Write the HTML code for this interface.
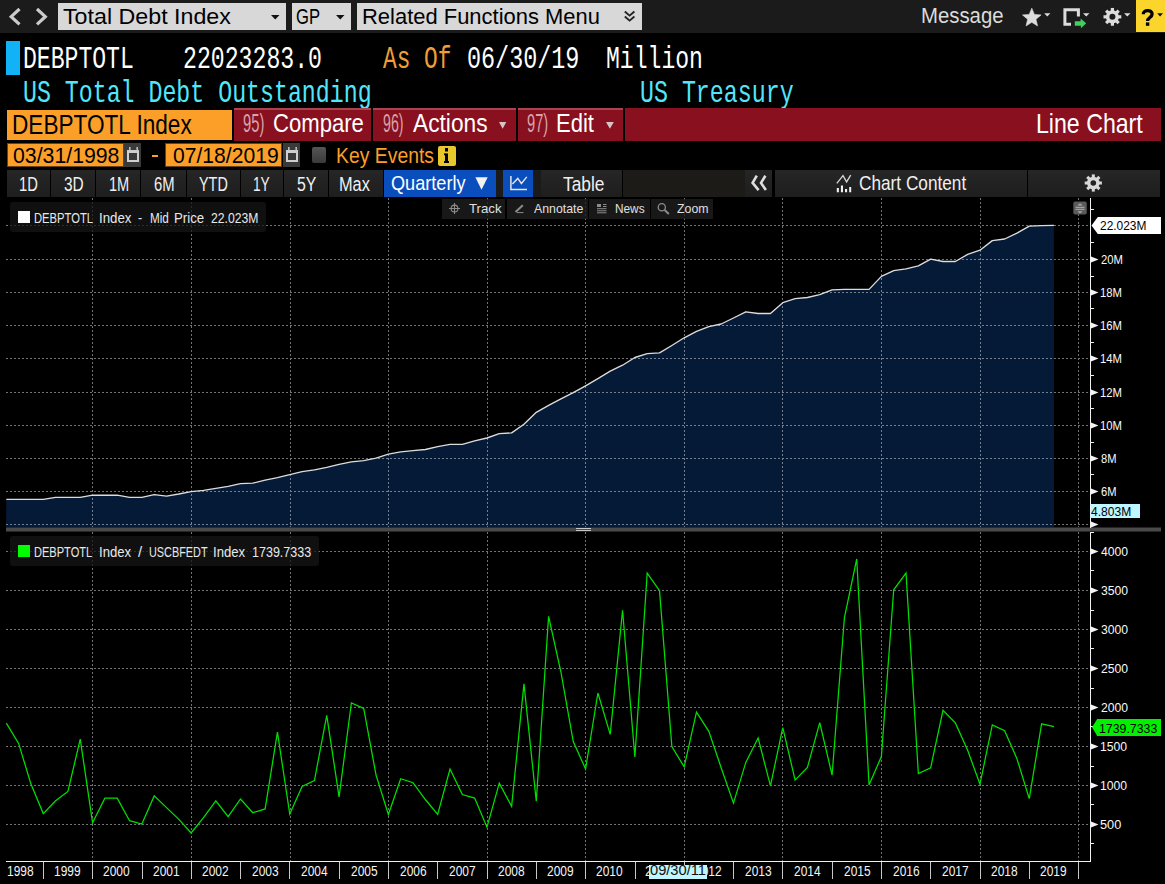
<!DOCTYPE html>
<html><head><meta charset="utf-8"><style>
html,body{margin:0;padding:0;background:#000;width:1165px;height:884px;overflow:hidden}
.r{position:absolute}
.t{position:absolute;line-height:0;white-space:pre;transform-origin:0 0}
.ov{position:absolute;left:0;top:0}
</style></head><body>
<div class="r" style="left:0px;top:0px;width:1165px;height:33px;background:#1b1b1b;"></div>
<div class="r" style="left:58px;top:3px;width:228px;height:27px;background:#d8d8d8;"></div>
<div class="r" style="left:292px;top:3px;width:59px;height:27px;background:#d8d8d8;"></div>
<div class="r" style="left:357px;top:3px;width:285px;height:27px;background:#d8d8d8;"></div>
<div class="r" style="left:1136px;top:0px;width:29px;height:32px;background:#fbd52b;"></div>
<span class="t" style="left:62.57px;top:16.69px;font-size:22.38px;font-family:'Liberation Sans', sans-serif;font-weight:normal;color:#000;transform:scaleX(1.0382);">Total Debt Index</span>
<span class="t" style="left:296.26px;top:16.69px;font-size:22.38px;font-family:'Liberation Sans', sans-serif;font-weight:normal;color:#000;transform:scaleX(0.7420);">GP</span>
<span class="t" style="left:361.97px;top:16.69px;font-size:22.38px;font-family:'Liberation Sans', sans-serif;font-weight:normal;color:#000;transform:scaleX(0.9809);">Related Functions Menu</span>
<span class="t" style="left:921.04px;top:15.14px;font-size:22.67px;font-family:'Liberation Sans', sans-serif;font-weight:normal;color:#dcdcdc;transform:scaleX(0.8983);">Message</span>
<div class="r" style="left:6px;top:41px;width:14px;height:34px;background:#12b2f6;"></div>
<span class="t" style="left:23.37px;top:60.07px;font-size:30.52px;font-family:'Liberation Mono', monospace;font-weight:normal;color:#fff;transform:scaleX(0.7565);">DEBPTOTL</span>
<span class="t" style="left:182.98px;top:60.07px;font-size:30.52px;font-family:'Liberation Mono', monospace;font-weight:normal;color:#fff;transform:scaleX(0.7592);">22023283.0</span>
<span class="t" style="left:383.40px;top:60.07px;font-size:30.52px;font-family:'Liberation Mono', monospace;font-weight:normal;color:#f29d38;transform:scaleX(0.7472);">As Of</span>
<span class="t" style="left:466.77px;top:60.07px;font-size:30.52px;font-family:'Liberation Mono', monospace;font-weight:normal;color:#fff;transform:scaleX(0.7674);">06/30/19</span>
<span class="t" style="left:606.06px;top:60.07px;font-size:30.52px;font-family:'Liberation Mono', monospace;font-weight:normal;color:#fff;transform:scaleX(0.7561);">Million</span>
<span class="t" style="left:23.37px;top:94.09px;font-size:30.52px;font-family:'Liberation Mono', monospace;font-weight:normal;color:#52e6fb;transform:scaleX(0.7614);">US Total Debt Outstanding</span>
<span class="t" style="left:640.25px;top:94.09px;font-size:30.52px;font-family:'Liberation Mono', monospace;font-weight:normal;color:#52e6fb;transform:scaleX(0.7627);">US Treasury</span>
<div class="r" style="left:7px;top:110px;width:225px;height:30px;background:#fb9f28;"></div>
<span class="t" style="left:11.61px;top:123.71px;font-size:28.20px;font-family:'Liberation Sans', sans-serif;font-weight:normal;color:#000;transform:scaleX(0.8021);">DEBPTOTL Index</span>
<div class="r" style="left:234px;top:108px;width:137px;height:33px;background:#88101f;border-top:2px solid #a9434d;box-sizing:border-box;"></div>
<div class="r" style="left:373px;top:108px;width:143px;height:33px;background:#88101f;border-top:2px solid #a9434d;box-sizing:border-box;"></div>
<div class="r" style="left:518px;top:108px;width:105px;height:33px;background:#88101f;border-top:2px solid #a9434d;box-sizing:border-box;"></div>
<div class="r" style="left:625px;top:108px;width:536px;height:33px;background:#88101f;"></div>
<span class="t" style="left:242.85px;top:123.38px;font-size:26.31px;font-family:'Liberation Sans', sans-serif;font-weight:normal;color:#d9a3aa;transform:scaleX(0.5603);">95)</span>
<span class="t" style="left:273.03px;top:123.38px;font-size:26.31px;font-family:'Liberation Sans', sans-serif;font-weight:normal;color:#fff;transform:scaleX(0.8406);">Compare</span>
<span class="t" style="left:382.92px;top:123.38px;font-size:26.31px;font-family:'Liberation Sans', sans-serif;font-weight:normal;color:#d9a3aa;transform:scaleX(0.5392);">96)</span>
<span class="t" style="left:412.50px;top:123.38px;font-size:26.31px;font-family:'Liberation Sans', sans-serif;font-weight:normal;color:#fff;transform:scaleX(0.8645);">Actions</span>
<span class="t" style="left:526.68px;top:123.38px;font-size:26.31px;font-family:'Liberation Sans', sans-serif;font-weight:normal;color:#d9a3aa;transform:scaleX(0.5577);">97)</span>
<span class="t" style="left:555.88px;top:123.38px;font-size:26.31px;font-family:'Liberation Sans', sans-serif;font-weight:normal;color:#fff;transform:scaleX(0.8373);">Edit</span>
<span class="t" style="left:1036.25px;top:123.57px;font-size:28.05px;font-family:'Liberation Sans', sans-serif;font-weight:normal;color:#fff;transform:scaleX(0.8249);">Line Chart</span>
<div class="r" style="left:7px;top:143px;width:117px;height:24px;background:#fb9f28;box-shadow:inset 0 0 0 1px #6b4210;"></div>
<div class="r" style="left:124px;top:143px;width:17px;height:24px;background:#3a3a3a;"></div>
<div class="r" style="left:165px;top:143px;width:117px;height:24px;background:#fb9f28;box-shadow:inset 0 0 0 1px #6b4210;"></div>
<div class="r" style="left:283px;top:143px;width:17px;height:24px;background:#3a3a3a;"></div>
<span class="t" style="left:12.99px;top:155.50px;font-size:21.95px;font-family:'Liberation Sans', sans-serif;font-weight:normal;color:#000;transform:scaleX(0.9695);">03/31/1998</span>
<span class="t" style="left:172.97px;top:155.50px;font-size:21.95px;font-family:'Liberation Sans', sans-serif;font-weight:normal;color:#000;transform:scaleX(0.9622);">07/18/2019</span>
<div class="r" style="left:152px;top:155px;width:6px;height:2px;background:#fb9f28;"></div>
<div class="r" style="left:312px;top:147px;width:14px;height:16px;background:linear-gradient(#555,#3a3a3a);border-radius:2px;"></div>
<span class="t" style="left:335.53px;top:155.50px;font-size:21.95px;font-family:'Liberation Sans', sans-serif;font-weight:normal;color:#fb9f28;transform:scaleX(0.8833);">Key Events</span>
<div class="r" style="left:438px;top:146px;width:18px;height:20px;background:#e8c82c;border-radius:2px;"></div>
<div class="r" style="left:7px;top:170px;width:43px;height:27px;background:linear-gradient(#262626,#1e1e1e);"></div>
<div class="r" style="left:51px;top:170px;width:44px;height:27px;background:linear-gradient(#262626,#1e1e1e);"></div>
<div class="r" style="left:96px;top:170px;width:44px;height:27px;background:linear-gradient(#262626,#1e1e1e);"></div>
<div class="r" style="left:141px;top:170px;width:45px;height:27px;background:linear-gradient(#262626,#1e1e1e);"></div>
<div class="r" style="left:187px;top:170px;width:53px;height:27px;background:linear-gradient(#262626,#1e1e1e);"></div>
<div class="r" style="left:241px;top:170px;width:42px;height:27px;background:linear-gradient(#262626,#1e1e1e);"></div>
<div class="r" style="left:284px;top:170px;width:44px;height:27px;background:linear-gradient(#262626,#1e1e1e);"></div>
<div class="r" style="left:329px;top:170px;width:54px;height:27px;background:linear-gradient(#262626,#1e1e1e);"></div>
<span class="t" style="left:18.96px;top:183.53px;font-size:19.91px;font-family:'Liberation Sans', sans-serif;font-weight:normal;color:#f0f0f0;transform:scaleX(0.7415);">1D</span>
<span class="t" style="left:63.86px;top:183.53px;font-size:19.91px;font-family:'Liberation Sans', sans-serif;font-weight:normal;color:#f0f0f0;transform:scaleX(0.7768);">3D</span>
<span class="t" style="left:108.96px;top:183.53px;font-size:19.91px;font-family:'Liberation Sans', sans-serif;font-weight:normal;color:#f0f0f0;transform:scaleX(0.7334);">1M</span>
<span class="t" style="left:154.21px;top:183.53px;font-size:19.91px;font-family:'Liberation Sans', sans-serif;font-weight:normal;color:#f0f0f0;transform:scaleX(0.7442);">6M</span>
<span class="t" style="left:198.92px;top:183.53px;font-size:19.91px;font-family:'Liberation Sans', sans-serif;font-weight:normal;color:#f0f0f0;transform:scaleX(0.7231);">YTD</span>
<span class="t" style="left:253.07px;top:183.53px;font-size:19.91px;font-family:'Liberation Sans', sans-serif;font-weight:normal;color:#f0f0f0;transform:scaleX(0.6887);">1Y</span>
<span class="t" style="left:296.66px;top:183.53px;font-size:19.91px;font-family:'Liberation Sans', sans-serif;font-weight:normal;color:#f0f0f0;transform:scaleX(0.7953);">5Y</span>
<span class="t" style="left:339.33px;top:183.53px;font-size:19.91px;font-family:'Liberation Sans', sans-serif;font-weight:normal;color:#f0f0f0;transform:scaleX(0.8210);">Max</span>
<div class="r" style="left:384px;top:170px;width:112px;height:27px;background:#0a4ebd;"></div>
<span class="t" style="left:390.91px;top:182.56px;font-size:20.06px;font-family:'Liberation Sans', sans-serif;font-weight:normal;color:#fff;transform:scaleX(0.9037);">Quarterly</span>
<div class="r" style="left:496px;top:170px;width:7px;height:27px;background:#1a1a1a;"></div>
<div class="r" style="left:503px;top:170px;width:30px;height:27px;background:#0a4ebd;"></div>
<div class="r" style="left:533px;top:170px;width:8px;height:27px;background:#1a1a1a;"></div>
<div class="r" style="left:541px;top:170px;width:81px;height:27px;background:linear-gradient(#262626,#1e1e1e);"></div>
<span class="t" style="left:562.72px;top:183.53px;font-size:19.91px;font-family:'Liberation Sans', sans-serif;font-weight:normal;color:#f0f0f0;transform:scaleX(0.8699);">Table</span>
<div class="r" style="left:623px;top:170px;width:122px;height:27px;background:#1c1b18;"></div>
<div class="r" style="left:745px;top:170px;width:27px;height:27px;background:linear-gradient(#262626,#1e1e1e);"></div>
<div class="r" style="left:775px;top:170px;width:252px;height:27px;background:linear-gradient(#262626,#1e1e1e);"></div>
<span class="t" style="left:859.45px;top:182.71px;font-size:19.62px;font-family:'Liberation Sans', sans-serif;font-weight:normal;color:#f0f0f0;transform:scaleX(0.8784);">Chart Content</span>
<div class="r" style="left:1028px;top:170px;width:132px;height:27px;background:linear-gradient(#262626,#1e1e1e);"></div>

<svg class="ov" width="1165" height="884" viewBox="0 0 1165 884">
<polygon points="6,527.5 6.30,499.40 18.62,499.40 30.95,499.40 43.27,499.40 55.60,497.30 67.92,497.30 80.25,497.30 92.57,495.20 104.90,495.20 117.22,495.20 129.55,497.30 141.88,497.30 154.20,494.70 166.53,496.10 178.85,494.00 191.18,491.60 203.50,490.40 215.82,488.40 228.15,486.30 240.47,483.70 252.80,483.20 265.12,480.10 277.45,477.60 289.77,474.60 302.10,471.70 314.43,469.80 326.75,467.40 339.07,464.30 351.40,461.80 363.72,460.60 376.05,458.20 388.38,454.20 400.70,451.80 413.02,450.70 425.35,449.50 437.68,446.60 450.00,444.40 462.32,444.40 474.65,440.90 486.97,438.00 499.30,433.70 511.62,432.90 523.95,424.30 536.27,412.30 548.60,405.40 560.92,398.80 573.25,392.70 585.57,385.80 597.90,378.60 610.22,371.20 622.55,365.20 634.87,357.50 647.20,353.70 659.52,352.90 671.85,345.50 684.17,337.80 696.50,331.40 708.82,326.60 721.15,324.00 733.47,318.00 745.80,311.80 758.12,313.50 770.45,313.50 782.77,302.70 795.10,298.70 807.42,297.50 819.75,294.60 832.07,289.80 844.40,289.40 856.72,289.40 869.05,289.40 881.37,276.40 893.70,270.60 906.02,268.80 918.35,265.80 930.67,259.10 943.00,261.50 955.32,261.50 967.65,254.40 979.97,250.20 992.30,240.60 1004.62,239.00 1016.95,233.20 1029.27,226.10 1041.60,225.70 1053.92,225.40 1054,527.5" fill="#041a37"/>
<path d="M6 225.5H1090M6 259.5H1090M6 292.5H1090M6 325.5H1090M6 358.5H1090M6 392.5H1090M6 425.5H1090M6 458.5H1090M6 491.5H1090M6 524.5H1090M6 551.5H1090M6 590.5H1090M6 629.5H1090M6 668.5H1090M6 707.5H1090M6 746.5H1090M6 785.5H1090M6 824.5H1090M92.5 198V527M92.5 532V861M191.5 198V527M191.5 532V861M290.5 198V527M290.5 532V861M388.5 198V527M388.5 532V861M487.5 198V527M487.5 532V861M585.5 198V527M585.5 532V861M684.5 198V527M684.5 532V861M782.5 198V527M782.5 532V861M881.5 198V527M881.5 532V861M980.5 198V527M980.5 532V861M1078.5 198V527M1078.5 532V861" stroke="rgba(255,255,255,0.45)" stroke-width="1" stroke-dasharray="2 2" fill="none" shape-rendering="crispEdges"/>
<polyline points="6.30,499.40 18.62,499.40 30.95,499.40 43.27,499.40 55.60,497.30 67.92,497.30 80.25,497.30 92.57,495.20 104.90,495.20 117.22,495.20 129.55,497.30 141.88,497.30 154.20,494.70 166.53,496.10 178.85,494.00 191.18,491.60 203.50,490.40 215.82,488.40 228.15,486.30 240.47,483.70 252.80,483.20 265.12,480.10 277.45,477.60 289.77,474.60 302.10,471.70 314.43,469.80 326.75,467.40 339.07,464.30 351.40,461.80 363.72,460.60 376.05,458.20 388.38,454.20 400.70,451.80 413.02,450.70 425.35,449.50 437.68,446.60 450.00,444.40 462.32,444.40 474.65,440.90 486.97,438.00 499.30,433.70 511.62,432.90 523.95,424.30 536.27,412.30 548.60,405.40 560.92,398.80 573.25,392.70 585.57,385.80 597.90,378.60 610.22,371.20 622.55,365.20 634.87,357.50 647.20,353.70 659.52,352.90 671.85,345.50 684.17,337.80 696.50,331.40 708.82,326.60 721.15,324.00 733.47,318.00 745.80,311.80 758.12,313.50 770.45,313.50 782.77,302.70 795.10,298.70 807.42,297.50 819.75,294.60 832.07,289.80 844.40,289.40 856.72,289.40 869.05,289.40 881.37,276.40 893.70,270.60 906.02,268.80 918.35,265.80 930.67,259.10 943.00,261.50 955.32,261.50 967.65,254.40 979.97,250.20 992.30,240.60 1004.62,239.00 1016.95,233.20 1029.27,226.10 1041.60,225.70 1053.92,225.40" fill="none" stroke="#dcdcdc" stroke-width="1.35" stroke-linejoin="round"/>
<polyline points="6.30,723.10 18.62,743.40 30.95,784.10 43.27,813.60 55.60,800.80 67.92,791.40 80.25,739.20 92.57,822.70 104.90,798.20 117.22,798.20 129.55,820.70 141.88,824.00 154.20,795.90 166.53,807.60 178.85,819.40 191.18,833.00 203.50,817.60 215.82,800.80 228.15,816.70 240.47,799.00 252.80,812.70 265.12,808.90 277.45,732.20 289.77,814.00 302.10,786.50 314.43,780.50 326.75,715.30 339.07,796.80 351.40,703.00 363.72,708.50 376.05,775.10 388.38,814.50 400.70,778.70 413.02,782.70 425.35,799.50 437.68,814.50 450.00,769.10 462.32,794.60 474.65,798.10 486.97,827.20 499.30,783.20 511.62,806.40 523.95,683.90 536.27,801.30 548.60,616.30 560.92,672.00 573.25,741.50 585.57,769.00 597.90,693.00 610.22,734.40 622.55,610.20 634.87,757.00 647.20,573.10 659.52,590.70 671.85,746.50 684.17,766.90 696.50,712.10 708.82,731.30 721.15,767.70 733.47,803.10 745.80,762.40 758.12,738.00 770.45,785.90 782.77,727.60 795.10,780.10 807.42,767.50 819.75,722.60 832.07,775.10 844.40,617.80 856.72,559.00 869.05,785.00 881.37,756.60 893.70,589.80 906.02,573.10 918.35,773.60 930.67,767.80 943.00,710.30 955.32,722.90 967.65,750.30 979.97,784.10 992.30,724.90 1004.62,730.70 1016.95,758.80 1029.27,798.60 1041.60,723.80 1053.92,726.70" fill="none" stroke="#00e000" stroke-width="1.25" stroke-linejoin="miter"/>
<rect x="6" y="527.5" width="1155" height="4" fill="#4a4a4a"/>
<path d="M576 528.5H591M576 530.5H591" stroke="#c8c8c8" stroke-width="1" shape-rendering="crispEdges"/>
<path d="M1090.5 198V527.5M1090.5 532V862M6 861.5H1091" stroke="#f0f0f0" stroke-width="1" fill="none" shape-rendering="crispEdges"/>
<path d="M43.5 862V879M92.5 862V879M142.5 862V879M191.5 862V879M240.5 862V879M289.5 862V879M339.5 862V879M388.5 862V879M437.5 862V879M487.5 862V879M536.5 862V879M585.5 862V879M635.5 862V879M684.5 862V879M733.5 862V879M782.5 862V879M832.5 862V879M881.5 862V879M930.5 862V879M980.5 862V879M1029.5 862V879M1078.5 862V879" stroke="#c8c8c8" stroke-width="1" fill="none" shape-rendering="crispEdges"/>
<path d="M1091 242.5H1094M1091 276.5H1094M1091 308.5H1094M1091 342.5H1094M1091 375.5H1094M1091 408.5H1094M1091 442.5H1094M1091 474.5H1094M1091 508.5H1094M1091 209.5H1094M1091 570.5H1094M1091 610.5H1094M1091 648.5H1094M1091 688.5H1094M1091 726.5H1094M1091 766.5H1094M1091 804.5H1094M1091 532.5H1094M1091 843.5H1094" stroke="#f0f0f0" stroke-width="1" fill="none" shape-rendering="crispEdges"/>
<path d="M1091 256.5L1098.5 259.5L1091 262.5ZM1091 289.5L1098.5 292.5L1091 295.5ZM1091 322.5L1098.5 325.5L1091 328.5ZM1091 355.5L1098.5 358.5L1091 361.5ZM1091 389.5L1098.5 392.5L1091 395.5ZM1091 422.5L1098.5 425.5L1091 428.5ZM1091 455.5L1098.5 458.5L1091 461.5ZM1091 488.5L1098.5 491.5L1091 494.5ZM1091 521.5L1098.5 524.5L1091 527.5ZM1091 548.5L1098.5 551.5L1091 554.5ZM1091 587.5L1098.5 590.5L1091 593.5ZM1091 626.5L1098.5 629.5L1091 632.5ZM1091 665.5L1098.5 668.5L1091 671.5ZM1091 704.5L1098.5 707.5L1091 710.5ZM1091 743.5L1098.5 746.5L1091 749.5ZM1091 782.5L1098.5 785.5L1091 788.5ZM1091 821.5L1098.5 824.5L1091 827.5Z" fill="#f4f4f4"/>
<path d="M1091.5 225.5L1097.8 217H1161V234H1097.8Z" fill="#fff"/>
<rect x="1090.5" y="504" width="49.5" height="14" fill="#bff6ff"/>
<path d="M1092 727.3L1097.2 719H1161V736H1097.2Z" fill="#00f000"/>
</svg>

<div class="r" style="left:10px;top:202px;width:256px;height:30px;background:rgba(22,22,22,0.75);border-radius:3px;"></div>
<div class="r" style="left:18px;top:211px;width:12px;height:12px;background:#fff;"></div>
<span class="t" style="left:34.22px;top:218.00px;font-size:13.81px;font-family:'Liberation Sans', sans-serif;font-weight:normal;color:#e8e8e8;transform:scaleX(0.8123);">DEBPTOTL</span>
<span class="t" style="left:99.27px;top:218.00px;font-size:13.81px;font-family:'Liberation Sans', sans-serif;font-weight:normal;color:#e8e8e8;transform:scaleX(0.9626);">Index</span>
<span class="t" style="left:137.86px;top:218.00px;font-size:13.81px;font-family:'Liberation Sans', sans-serif;font-weight:normal;color:#e8e8e8;transform:scaleX(0.9079);">-</span>
<span class="t" style="left:149.54px;top:218.00px;font-size:13.81px;font-family:'Liberation Sans', sans-serif;font-weight:normal;color:#e8e8e8;transform:scaleX(0.8456);">Mid</span>
<span class="t" style="left:173.76px;top:218.00px;font-size:13.81px;font-family:'Liberation Sans', sans-serif;font-weight:normal;color:#e8e8e8;transform:scaleX(0.9592);">Price</span>
<span class="t" style="left:211.29px;top:218.00px;font-size:13.81px;font-family:'Liberation Sans', sans-serif;font-weight:normal;color:#e8e8e8;transform:scaleX(0.8824);">22.023M</span>
<div class="r" style="left:10px;top:536px;width:309px;height:30px;background:rgba(22,22,22,0.75);border-radius:3px;"></div>
<div class="r" style="left:18px;top:545px;width:12px;height:12px;background:#00ff00;"></div>
<span class="t" style="left:34.37px;top:552.22px;font-size:13.95px;font-family:'Liberation Sans', sans-serif;font-weight:normal;color:#e8e8e8;transform:scaleX(0.7930);">DEBPTOTL</span>
<span class="t" style="left:98.88px;top:552.22px;font-size:13.95px;font-family:'Liberation Sans', sans-serif;font-weight:normal;color:#e8e8e8;transform:scaleX(0.9438);">Index</span>
<span class="t" style="left:137.63px;top:552.22px;font-size:13.95px;font-family:'Liberation Sans', sans-serif;font-weight:normal;color:#e8e8e8;transform:scaleX(1.0750);">/</span>
<span class="t" style="left:148.73px;top:552.22px;font-size:13.95px;font-family:'Liberation Sans', sans-serif;font-weight:normal;color:#e8e8e8;transform:scaleX(0.7791);">USCBFEDT</span>
<span class="t" style="left:213.20px;top:552.22px;font-size:13.95px;font-family:'Liberation Sans', sans-serif;font-weight:normal;color:#e8e8e8;transform:scaleX(0.9409);">Index</span>
<span class="t" style="left:251.79px;top:552.22px;font-size:13.95px;font-family:'Liberation Sans', sans-serif;font-weight:normal;color:#e8e8e8;transform:scaleX(0.8979);">1739.7333</span>
<div class="r" style="left:442px;top:199px;width:63px;height:20px;background:rgba(30,30,30,0.8);"></div>
<div class="r" style="left:507px;top:199px;width:81px;height:20px;background:rgba(30,30,30,0.8);"></div>
<div class="r" style="left:589px;top:199px;width:61px;height:20px;background:rgba(30,30,30,0.8);"></div>
<div class="r" style="left:651px;top:199px;width:62px;height:20px;background:rgba(30,30,30,0.8);"></div>
<span class="t" style="left:468.69px;top:209.13px;font-size:12.79px;font-family:'Liberation Sans', sans-serif;font-weight:normal;color:#e0e0e0;transform:scaleX(1.0319);">Track</span>
<span class="t" style="left:533.96px;top:209.13px;font-size:12.79px;font-family:'Liberation Sans', sans-serif;font-weight:normal;color:#e0e0e0;transform:scaleX(0.9624);">Annotate</span>
<span class="t" style="left:614.52px;top:209.13px;font-size:12.79px;font-family:'Liberation Sans', sans-serif;font-weight:normal;color:#e0e0e0;transform:scaleX(0.9257);">News</span>
<span class="t" style="left:677.35px;top:209.13px;font-size:12.79px;font-family:'Liberation Sans', sans-serif;font-weight:normal;color:#e0e0e0;transform:scaleX(0.9639);">Zoom</span>
<span class="t" style="left:1100.78px;top:260.41px;font-size:13.37px;font-family:'Liberation Sans', sans-serif;font-weight:normal;color:#f8f8f8;transform:scaleX(0.8459);">20M</span>
<span class="t" style="left:1100.35px;top:293.41px;font-size:13.37px;font-family:'Liberation Sans', sans-serif;font-weight:normal;color:#f8f8f8;transform:scaleX(0.8459);">18M</span>
<span class="t" style="left:1100.35px;top:326.41px;font-size:13.37px;font-family:'Liberation Sans', sans-serif;font-weight:normal;color:#f8f8f8;transform:scaleX(0.8459);">16M</span>
<span class="t" style="left:1100.35px;top:359.41px;font-size:13.37px;font-family:'Liberation Sans', sans-serif;font-weight:normal;color:#f8f8f8;transform:scaleX(0.8459);">14M</span>
<span class="t" style="left:1100.35px;top:393.31px;font-size:13.37px;font-family:'Liberation Sans', sans-serif;font-weight:normal;color:#f8f8f8;transform:scaleX(0.8459);">12M</span>
<span class="t" style="left:1100.35px;top:426.41px;font-size:13.37px;font-family:'Liberation Sans', sans-serif;font-weight:normal;color:#f8f8f8;transform:scaleX(0.8459);">10M</span>
<span class="t" style="left:1100.69px;top:459.41px;font-size:13.37px;font-family:'Liberation Sans', sans-serif;font-weight:normal;color:#f8f8f8;transform:scaleX(0.8339);">8M</span>
<span class="t" style="left:1100.69px;top:492.41px;font-size:13.37px;font-family:'Liberation Sans', sans-serif;font-weight:normal;color:#f8f8f8;transform:scaleX(0.8339);">6M</span>
<span class="t" style="left:1100.52px;top:552.24px;font-size:13.37px;font-family:'Liberation Sans', sans-serif;font-weight:normal;color:#f8f8f8;transform:scaleX(0.9108);">4000</span>
<span class="t" style="left:1100.52px;top:591.41px;font-size:13.37px;font-family:'Liberation Sans', sans-serif;font-weight:normal;color:#f8f8f8;transform:scaleX(0.9108);">3500</span>
<span class="t" style="left:1100.52px;top:630.41px;font-size:13.37px;font-family:'Liberation Sans', sans-serif;font-weight:normal;color:#f8f8f8;transform:scaleX(0.9108);">3000</span>
<span class="t" style="left:1100.52px;top:669.41px;font-size:13.37px;font-family:'Liberation Sans', sans-serif;font-weight:normal;color:#f8f8f8;transform:scaleX(0.9108);">2500</span>
<span class="t" style="left:1100.52px;top:708.41px;font-size:13.37px;font-family:'Liberation Sans', sans-serif;font-weight:normal;color:#f8f8f8;transform:scaleX(0.9108);">2000</span>
<span class="t" style="left:1100.14px;top:747.41px;font-size:13.37px;font-family:'Liberation Sans', sans-serif;font-weight:normal;color:#f8f8f8;transform:scaleX(0.9108);">1500</span>
<span class="t" style="left:1100.14px;top:786.41px;font-size:13.37px;font-family:'Liberation Sans', sans-serif;font-weight:normal;color:#f8f8f8;transform:scaleX(0.9108);">1000</span>
<span class="t" style="left:1100.03px;top:825.41px;font-size:13.37px;font-family:'Liberation Sans', sans-serif;font-weight:normal;color:#f8f8f8;transform:scaleX(0.9538);">500</span>
<span class="t" style="left:1100.01px;top:226.31px;font-size:13.66px;font-family:'Liberation Sans', sans-serif;font-weight:normal;color:#000;transform:scaleX(0.8730);">22.023M</span>
<span class="t" style="left:1090.89px;top:511.85px;font-size:12.35px;font-family:'Liberation Sans', sans-serif;font-weight:normal;color:#000;transform:scaleX(0.9756);">4.803M</span>
<span class="t" style="left:1099.19px;top:728.59px;font-size:13.08px;font-family:'Liberation Sans', sans-serif;font-weight:normal;color:#000;transform:scaleX(0.9432);">1739.7333</span>
<span class="t" style="left:7.33px;top:870.80px;font-size:13.81px;font-family:'Liberation Sans', sans-serif;font-weight:normal;color:#f4f4f4;transform:scaleX(0.8658);">1998</span>
<span class="t" style="left:54.02px;top:870.80px;font-size:13.81px;font-family:'Liberation Sans', sans-serif;font-weight:normal;color:#f4f4f4;transform:scaleX(0.8658);">1999</span>
<span class="t" style="left:103.43px;top:870.80px;font-size:13.81px;font-family:'Liberation Sans', sans-serif;font-weight:normal;color:#f4f4f4;transform:scaleX(0.8658);">2000</span>
<span class="t" style="left:153.17px;top:870.80px;font-size:13.81px;font-family:'Liberation Sans', sans-serif;font-weight:normal;color:#f4f4f4;transform:scaleX(0.8658);">2001</span>
<span class="t" style="left:202.21px;top:870.80px;font-size:13.81px;font-family:'Liberation Sans', sans-serif;font-weight:normal;color:#f4f4f4;transform:scaleX(0.8658);">2002</span>
<span class="t" style="left:251.95px;top:870.80px;font-size:13.81px;font-family:'Liberation Sans', sans-serif;font-weight:normal;color:#f4f4f4;transform:scaleX(0.8658);">2003</span>
<span class="t" style="left:300.88px;top:870.80px;font-size:13.81px;font-family:'Liberation Sans', sans-serif;font-weight:normal;color:#f4f4f4;transform:scaleX(0.8658);">2004</span>
<span class="t" style="left:350.73px;top:870.80px;font-size:13.81px;font-family:'Liberation Sans', sans-serif;font-weight:normal;color:#f4f4f4;transform:scaleX(0.8658);">2005</span>
<span class="t" style="left:399.77px;top:870.80px;font-size:13.81px;font-family:'Liberation Sans', sans-serif;font-weight:normal;color:#f4f4f4;transform:scaleX(0.8658);">2006</span>
<span class="t" style="left:448.71px;top:870.80px;font-size:13.81px;font-family:'Liberation Sans', sans-serif;font-weight:normal;color:#f4f4f4;transform:scaleX(0.8658);">2007</span>
<span class="t" style="left:498.45px;top:870.80px;font-size:13.81px;font-family:'Liberation Sans', sans-serif;font-weight:normal;color:#f4f4f4;transform:scaleX(0.8658);">2008</span>
<span class="t" style="left:547.49px;top:870.80px;font-size:13.81px;font-family:'Liberation Sans', sans-serif;font-weight:normal;color:#f4f4f4;transform:scaleX(0.8658);">2009</span>
<span class="t" style="left:596.43px;top:870.80px;font-size:13.81px;font-family:'Liberation Sans', sans-serif;font-weight:normal;color:#f4f4f4;transform:scaleX(0.8658);">2010</span>
<span class="t" style="left:645.03px;top:870.96px;font-size:13.81px;font-family:'Liberation Sans', sans-serif;font-weight:normal;color:#f4f4f4;transform:scaleX(0.8960);">2011</span>
<span class="t" style="left:695.21px;top:870.80px;font-size:13.81px;font-family:'Liberation Sans', sans-serif;font-weight:normal;color:#f4f4f4;transform:scaleX(0.8658);">2012</span>
<span class="t" style="left:744.95px;top:870.80px;font-size:13.81px;font-family:'Liberation Sans', sans-serif;font-weight:normal;color:#f4f4f4;transform:scaleX(0.8658);">2013</span>
<span class="t" style="left:793.88px;top:870.80px;font-size:13.81px;font-family:'Liberation Sans', sans-serif;font-weight:normal;color:#f4f4f4;transform:scaleX(0.8658);">2014</span>
<span class="t" style="left:843.73px;top:870.80px;font-size:13.81px;font-family:'Liberation Sans', sans-serif;font-weight:normal;color:#f4f4f4;transform:scaleX(0.8658);">2015</span>
<span class="t" style="left:892.77px;top:870.80px;font-size:13.81px;font-family:'Liberation Sans', sans-serif;font-weight:normal;color:#f4f4f4;transform:scaleX(0.8658);">2016</span>
<span class="t" style="left:941.71px;top:870.80px;font-size:13.81px;font-family:'Liberation Sans', sans-serif;font-weight:normal;color:#f4f4f4;transform:scaleX(0.8658);">2017</span>
<span class="t" style="left:991.45px;top:870.80px;font-size:13.81px;font-family:'Liberation Sans', sans-serif;font-weight:normal;color:#f4f4f4;transform:scaleX(0.8658);">2018</span>
<span class="t" style="left:1040.49px;top:870.80px;font-size:13.81px;font-family:'Liberation Sans', sans-serif;font-weight:normal;color:#f4f4f4;transform:scaleX(0.8658);">2019</span>
<div class="r" style="left:649px;top:865px;width:58px;height:14px;background:#bff6ff"></div>
<span class="t" style="left:650.00px;top:870.24px;font-size:14.54px;font-family:'Liberation Sans', sans-serif;font-weight:normal;color:#111;transform:scaleX(1.0086);">09/30/11</span>
<svg class="ov" width="1165" height="884" viewBox="0 0 1165 884">
<path d="M19.5 9L11.2 16.7L19.5 24.4M37 9L45.3 16.7L37 24.4" stroke="#cbcbcb" stroke-width="3.2" fill="none"/>
<path d="M271 15H279.5L275.25 19.5ZM336 15H344.5L340.25 19.5Z" fill="#111"/>
<path d="M624.8 11.5L629.6 15.6L634.4 11.5M624.8 16.5L629.6 20.6L634.4 16.5" stroke="#222" stroke-width="1.9" fill="none"/>
<polygon points="1031.80,8.15 1034.39,14.39 1041.12,14.92 1035.98,19.31 1037.56,25.88 1031.80,22.35 1026.04,25.88 1027.62,19.31 1022.48,14.92 1029.21,14.39" fill="#dcdcdc" stroke="#dcdcdc" stroke-width="0.6" stroke-linejoin="round"/>
<path d="M1044.2 13.2H1050.4L1047.3 16.5ZM1083 13.2H1089.5L1086.25 16.5ZM1124.1 13.2H1130.5L1127.3 16.5Z" fill="#dcdcdc"/>
<path d="M1157.2 13.2H1163L1160.1 16.4Z" fill="#111"/>
<path d="M1071 24.2H1064.9V9.65H1078.4V16.4" stroke="#dcdcdc" stroke-width="3" fill="none"/>
<path d="M1074.8 21.2H1080.6V18.4L1086.2 23.3L1080.9 28.2V25.7H1074.8Z" fill="#40d060"/>
<circle cx="1112.4" cy="16.85" r="6.6" fill="#dcdcdc"/><rect x="1110.8000000000002" y="7.950000000000001" width="3.2" height="8.9" fill="#dcdcdc" transform="rotate(0 1112.4 16.85)"/><rect x="1110.8000000000002" y="7.950000000000001" width="3.2" height="8.9" fill="#dcdcdc" transform="rotate(45 1112.4 16.85)"/><rect x="1110.8000000000002" y="7.950000000000001" width="3.2" height="8.9" fill="#dcdcdc" transform="rotate(90 1112.4 16.85)"/><rect x="1110.8000000000002" y="7.950000000000001" width="3.2" height="8.9" fill="#dcdcdc" transform="rotate(135 1112.4 16.85)"/><rect x="1110.8000000000002" y="7.950000000000001" width="3.2" height="8.9" fill="#dcdcdc" transform="rotate(180 1112.4 16.85)"/><rect x="1110.8000000000002" y="7.950000000000001" width="3.2" height="8.9" fill="#dcdcdc" transform="rotate(225 1112.4 16.85)"/><rect x="1110.8000000000002" y="7.950000000000001" width="3.2" height="8.9" fill="#dcdcdc" transform="rotate(270 1112.4 16.85)"/><rect x="1110.8000000000002" y="7.950000000000001" width="3.2" height="8.9" fill="#dcdcdc" transform="rotate(315 1112.4 16.85)"/><circle cx="1112.4" cy="16.85" r="3.0" fill="#1b1b1b"/>
<circle cx="1093.3" cy="183.0" r="6.3" fill="#d8d8d8"/><rect x="1091.8" y="174.4" width="3.0" height="8.6" fill="#d8d8d8" transform="rotate(0 1093.3 183.0)"/><rect x="1091.8" y="174.4" width="3.0" height="8.6" fill="#d8d8d8" transform="rotate(45 1093.3 183.0)"/><rect x="1091.8" y="174.4" width="3.0" height="8.6" fill="#d8d8d8" transform="rotate(90 1093.3 183.0)"/><rect x="1091.8" y="174.4" width="3.0" height="8.6" fill="#d8d8d8" transform="rotate(135 1093.3 183.0)"/><rect x="1091.8" y="174.4" width="3.0" height="8.6" fill="#d8d8d8" transform="rotate(180 1093.3 183.0)"/><rect x="1091.8" y="174.4" width="3.0" height="8.6" fill="#d8d8d8" transform="rotate(225 1093.3 183.0)"/><rect x="1091.8" y="174.4" width="3.0" height="8.6" fill="#d8d8d8" transform="rotate(270 1093.3 183.0)"/><rect x="1091.8" y="174.4" width="3.0" height="8.6" fill="#d8d8d8" transform="rotate(315 1093.3 183.0)"/><circle cx="1093.3" cy="183.0" r="2.8" fill="#222"/>
<path d="M128 151H138V161H128Z" stroke="#cfcfcf" stroke-width="2" fill="none"/>
<rect x="127" y="150" width="12" height="3" fill="#cfcfcf"/>
<rect x="129" y="147" width="1.6" height="3.5" fill="#bdbdbd"/><rect x="136.4" y="147" width="1.6" height="3.5" fill="#bdbdbd"/>
<path d="M287 151H297V161H287Z" stroke="#cfcfcf" stroke-width="2" fill="none"/>
<rect x="286" y="150" width="12" height="3" fill="#cfcfcf"/>
<rect x="288" y="147" width="1.6" height="3.5" fill="#bdbdbd"/><rect x="295.4" y="147" width="1.6" height="3.5" fill="#bdbdbd"/>
<rect x="445" y="148" width="3" height="3.5" fill="#000"/><rect x="445" y="153.4" width="3" height="9" fill="#000"/><rect x="444" y="153.4" width="1.5" height="1.8" fill="#000"/><rect x="444" y="161" width="5" height="2" fill="#000"/>
<path d="M499 122H506.3L502.65 128.8ZM606 122H613.8L609.9 128.8Z" fill="#d6c5c8"/>
<path d="M475.4 177.2H487.7L481.5 189.8Z" fill="#f2f2f2"/>
<path d="M510.9 176V189.6H527" stroke="#e6e6e6" stroke-width="1.5" fill="none"/>
<path d="M512.4 184.1L517.8 178.4L521.4 183.5L526.8 176.9" stroke="#e6e6e6" stroke-width="1.4" fill="none"/>
<path d="M756.8 175.7L752.6 182.9L758.6 190.1M765.4 175.7L761 182.9L765.9 190.1" stroke="#dedede" stroke-width="2.6" fill="none"/>
<path d="M836.8 183.4L843 175.7L846.6 181.9L850.7 175.2" stroke="#d8d8d8" stroke-width="1.3" fill="none"/>
<path d="M836.8 188H838.9V192.2H836.8ZM840.9 185.5H843V192.2H840.9ZM845 189.1H847.1V192.2H845ZM849.2 187H851.2V192.2H849.2Z" fill="#f0f0f0"/>
<rect x="1073.3" y="201.4" width="13.5" height="13.2" rx="2" fill="#5a5a5a"/>
<path d="M1075.5 207.3H1084.5M1075.5 209.3H1084.5" stroke="#bdbdbd" stroke-width="0.9"/>
<path d="M1077.2 205.5L1080 203.2L1082.8 205.5ZM1077.2 211.3L1080 213.5L1082.8 211.3Z" fill="#a8a8a8"/>
<circle cx="454.5" cy="208.5" r="3.4" stroke="#8c8c8c" stroke-width="1.1" fill="none"/>
<path d="M454.5 203V214M449 208.5H460" stroke="#8c8c8c" stroke-width="1.1"/>
<path d="M515.5 212L522.8 205.2" stroke="#8c8c8c" stroke-width="2"/><path d="M517 212.6H523.5" stroke="#8c8c8c" stroke-width="1"/>
<path d="M597 204.5H601M597 206.5H601M603 204.5H606.5M603 206.5H606.5M597 208.7H606.5M597 210.8H606.5M597 212.8H606.5" stroke="#8c8c8c" stroke-width="1"/>
<rect x="597" y="204" width="4" height="3" fill="#8c8c8c"/>
<circle cx="661.8" cy="207.2" r="3.6" stroke="#8c8c8c" stroke-width="1.3" fill="none"/><path d="M664.6 210L668.8 214" stroke="#8c8c8c" stroke-width="2"/>
</svg>
<svg class="ov" width="1165" height="884"><path d="M1143.3 14.2C1143.1 9.6 1152.1 9.2 1152.1 14C1152.1 17.6 1147.6 17.4 1147.6 21" stroke="#000" stroke-width="3.3" fill="none"/><rect x="1145.9" y="22.4" width="3.4" height="3.4" fill="#000"/></svg>
</body></html>
